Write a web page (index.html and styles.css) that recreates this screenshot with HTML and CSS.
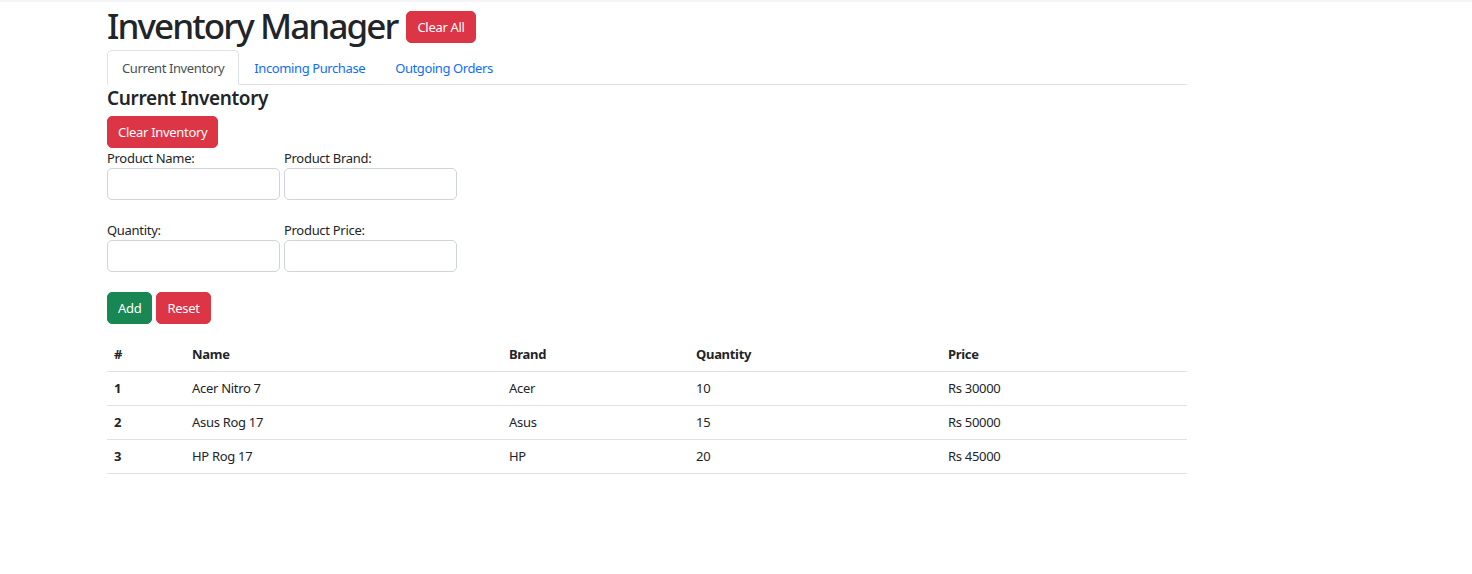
FILE: index.html
```html
<!DOCTYPE html>
<html lang="en">
<head>
<meta charset="utf-8">
<title>Inventory Manager</title>
<link rel="stylesheet" href="styles.css">
</head>
<body>
<div class="topbar"></div>
<div class="container">
  <div class="header">
    <h1 class="title">Inventory Manager</h1>
    <button class="btn btn-sm btn-danger btn-header">Clear All</button>
  </div>
  <ul class="tabs">
    <li class="tab active">Current Inventory</li>
    <li class="tab">Incoming Purchase</li>
    <li class="tab">Outgoing Orders</li>
  </ul>
  <h2 class="section-title">Current Inventory</h2>
  <button class="btn btn-sm btn-danger">Clear Inventory</button>
  <form class="form">
    <div class="form-row">
      <div class="field">
        <label class="label">Product Name:</label>
        <input class="input" type="text">
      </div>
      <div class="field">
        <label class="label">Product Brand:</label>
        <input class="input" type="text">
      </div>
    </div>
    <div class="form-row">
      <div class="field">
        <label class="label">Quantity:</label>
        <input class="input" type="text">
      </div>
      <div class="field">
        <label class="label">Product Price:</label>
        <input class="input" type="text">
      </div>
    </div>
    <div class="actions">
      <button type="button" class="btn btn-sm btn-success">Add</button>
      <button type="button" class="btn btn-sm btn-danger">Reset</button>
    </div>
  </form>
  <table class="table">
    <thead>
      <tr>
        <th class="c-num">#</th>
        <th class="c-name">Name</th>
        <th class="c-brand">Brand</th>
        <th class="c-qty">Quantity</th>
        <th class="c-price">Price</th>
      </tr>
    </thead>
    <tbody>
      <tr><th>1</th><td>Acer Nitro 7</td><td>Acer</td><td>10</td><td>Rs 30000</td></tr>
      <tr><th>2</th><td>Asus Rog 17</td><td>Asus</td><td>15</td><td>Rs 50000</td></tr>
      <tr><th>3</th><td>HP Rog 17</td><td>HP</td><td>20</td><td>Rs 45000</td></tr>
    </tbody>
  </table>
</div>
</body>
</html>
```

FILE: styles.css
```css
* { box-sizing: border-box; }
html, body { margin: 0; padding: 0; background: #fff; }
body {
  font-family: "Noto Sans", "Open Sans", sans-serif;
  color: #212529;
  font-size: 13px;
  line-height: 1.5;
  letter-spacing: -0.3px;
}
.topbar { height: 2px; background: #f4f5f6; }
.container { width: 1080px; margin-left: 107px; }

.header { display: flex; align-items: center; gap: 9px; height: 48px; }
.title { margin: 0; font-size: 35px; font-weight: 500; line-height: 48px; letter-spacing: -1.9px; }
.btn-header { margin-top: 2px; padding: 5px 11px; }

.btn {
  border: 1px solid transparent;
  border-radius: 5px;
  color: #fff;
  font-family: inherit;
  letter-spacing: -0.3px;
  cursor: pointer;
}
.btn-sm { font-size: 13px; line-height: 20px; padding: 5px 10px; height: 32px; }
.btn-danger { background: #dc3545; border-color: #dc3545; }
.btn-success { background: #198754; border-color: #198754; }

.tabs {
  list-style: none; margin: 0; padding: 0;
  display: flex; border-bottom: 1px solid #dee2e6; height: 35px;
}
.tab {
  padding: 7px 14px; font-size: 13px; line-height: 20px; color: #0d6efd;
  border: 1px solid transparent; border-radius: 5px 5px 0 0; margin-bottom: -1px;
  letter-spacing: -0.4px;
}
.tab.active { color: #495057; border-color: #dee2e6 #dee2e6 #fff; background: #fff; }

.section-title { margin: 1px 0 6px; font-size: 19px; font-weight: 600; line-height: 24px; letter-spacing: -0.35px; }

.form { margin: 0; }
.form-row { display: flex; gap: 4px; margin-bottom: 20px; }
.field { display: flex; flex-direction: column; }
.label { font-size: 13px; line-height: 20px; }
.input {
  width: 173px; height: 32px; border: 1px solid #ced4da; border-radius: 5px;
  margin: 0; background: #fff;
}
.actions { display: flex; gap: 4px; }

.table { width: 1080px; border-collapse: collapse; margin-top: 14px; table-layout: fixed; }
.table th, .table td {
  text-align: left; padding: 8px 7px; font-size: 13px; line-height: 17px;
  border-bottom: 1px solid #dee2e6; color: #212529;
}
.table th { font-weight: 700; }
.table tbody td { font-weight: 400; }
.c-num { width: 78px; }
.c-name { width: 317px; }
.c-brand { width: 187px; }
.c-qty { width: 252px; }
.c-price { width: 246px; }
```
